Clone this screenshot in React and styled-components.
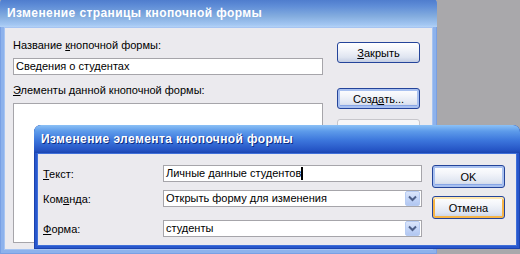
import React from 'react'
import styled, { createGlobalStyle, css } from 'styled-components'

const GlobalStyle = createGlobalStyle`
  html, body { margin: 0; padding: 0; }
  body {
    font-family: "Liberation Sans", Arial, sans-serif;
    font-size: 11px;
    color: #000;
  }
`

const Desktop = styled.div`
  position: relative;
  width: 520px;
  height: 254px;
  background: #a9a8ab;
  overflow: hidden;
`

const Window = styled.div`
  position: absolute;
  left: ${p => p.$left}px;
  top: ${p => p.$top}px;
  width: ${p => p.$width}px;
  height: ${p => p.$height}px;
  box-sizing: border-box;
  display: flex;
  flex-direction: column;
  border-radius: 7px 7px 0 0;
  background: ${p => (p.$active ? '#2857cc' : '#8db2ec')};
  padding: 0 ${p => p.$frame}px ${p => p.$frame}px;
  box-shadow: inset 0 0 0 1px ${p => (p.$active ? '#1c43ae' : '#79a0e4')};
`

const TitleBar = styled.div`
  flex: none;
  height: ${p => p.$h}px;
  margin: 0 -${p => p.$frame}px;
  padding: ${p => p.$pt}px 0 0 ${p => p.$pl}px;
  box-sizing: border-box;
  border-radius: 7px 7px 0 0;
  display: flex;
  align-items: center;
  color: #fff;
  font-family: "Liberation Sans", Arial, sans-serif;
  font-weight: bold;
  font-size: 12px;
  letter-spacing: 0.4px;
  white-space: nowrap;
  overflow: hidden;
  ${p =>
    p.$active
      ? css`
          background: linear-gradient(180deg, #8cc1f6 0%, #5d9bea 22%, #3c76dc 55%, #2656c6 88%, #1b45b0 100%);
          text-shadow: 1px 1px 0 #0b2d86;
        `
      : css`
          background: linear-gradient(180deg, #4775c9 0%, #5f8dd7 30%, #84addf 65%, #a2c6f2 92%, #b3d2f6 100%);
        `}
`

const Client = styled.div`
  flex: 1;
  display: flex;
  background: #ebeaee;
  box-shadow: inset 0 0 0 1px ${p => (p.$active ? '#3f6fd9' : '#a6c4f2')};
`

const Column = styled.div`
  display: flex;
  flex-direction: column;
  width: ${p => p.$w}px;
  margin-left: ${p => p.$ml || 0}px;
  padding-top: ${p => p.$pt || 0}px;
`

const Label = styled.div`
  height: 14px;
  line-height: 14px;
  white-space: nowrap;
  margin-top: ${p => p.$mt || 0}px;
`

const Acc = styled.span`
  text-decoration: underline;
  text-underline-offset: 1px;
`

const Field = styled.div`
  box-sizing: border-box;
  height: ${p => p.$h || 17}px;
  margin-top: ${p => p.$mt || 0}px;
  background: #fff;
  border: 1px solid #a6a5aa;
  padding-left: 2px;
  line-height: 15px;
  white-space: nowrap;
  display: flex;
  align-items: center;
  position: relative;
`

const Caret = styled.span`
  display: inline-block;
  width: 2px;
  height: 13px;
  background: #000;
`

const ComboArrow = styled.span`
  position: absolute;
  right: 1px;
  top: 0;
  width: 15px;
  height: 15px;
  box-sizing: border-box;
  border: 1px solid #b7ccf3;
  border-radius: 2px;
  background: linear-gradient(180deg, #dbe6fb 0%, #c4d6f8 50%, #b2c7f1 100%);
  display: flex;
  align-items: center;
  justify-content: center;
`

const Button = styled.div`
  box-sizing: border-box;
  height: ${p => p.$h}px;
  margin-top: ${p => p.$mt || 0}px;
  border: 1px solid #24449a;
  border-radius: 3px;
  background: linear-gradient(180deg, #ffffff 0%, #f3f5fa 35%, #dfe5f1 75%, #c3cde2 100%);
  display: flex;
  align-items: center;
  justify-content: center;
  white-space: nowrap;
  ${p =>
    p.$ring === 'blue' &&
    css`
      box-shadow: inset 0 0 0 2px #a9c1f0, inset 0 -1px 0 2px #88a6e6;
    `}
  ${p =>
    p.$ring === 'orange' &&
    css`
      box-shadow: inset 0 2px 0 0 #ffe6ae, inset 0 0 0 2px #f6b446;
    `}
  ${p =>
    p.$disabled &&
    css`
      border-color: #c7c6cb;
      background: #f6f6f8;
      color: #a3a2a6;
    `}
`

const FormGrid = styled.div`
  display: grid;
  grid-template-columns: 120px 259px;
  align-items: center;
  align-content: start;
  padding: 12px 0 0 6px;
`

const Row = styled.div`
  display: contents;
`

const Cell = styled.div`
  margin-top: ${p => p.$mt || 0}px;
`

const Chevron = () => (
  <svg width="9" height="7" viewBox="0 0 9 7">
    <path d="M1 1.5 L4.5 5 L8 1.5" fill="none" stroke="#4d5f88" strokeWidth="2" />
  </svg>
)

const Combo = ({ value, mt }) => (
  <Field $mt={mt}>
    {value}
    <ComboArrow>
      <Chevron />
    </ComboArrow>
  </Field>
)

const fields = [
  { label: <><Acc>Т</Acc>екст:</>, kind: 'text', value: 'Личные данные студентов', mt: 0 },
  { label: <>Ком<Acc>а</Acc>нда:</>, kind: 'combo', value: 'Открыть форму для изменения', mt: 8 },
  { label: <><Acc>Ф</Acc>орма:</>, kind: 'combo', value: 'студенты', mt: 13 },
]

export default function App() {
  return (
    <>
      <GlobalStyle />
      <Desktop>
        <Window $left={0} $top={-3} $width={437} $height={257} $frame={4}>
          <TitleBar $h={30} $frame={4} $pt={2} $pl={7}>
            Изменение страницы кнопочной формы
          </TitleBar>
          <Client>
            <Column $w={310} $ml={9}>
              <Label $mt={11}>Название <Acc>к</Acc>нопочной формы:</Label>
              <Field $mt={6}>Сведения о студентах</Field>
              <Label $mt={8}><Acc>Э</Acc>лементы данной кнопочной формы:</Label>
              <Field $mt={6} $h={140} />
            </Column>
            <Column $w={83} $ml={14} $pt={15}>
              <Button $h={21}><Acc>З</Acc>акрыть</Button>
              <Button $h={21} $mt={25} $ring="blue">Созд<Acc>а</Acc>ть...</Button>
              <Button $h={21} $mt={10} $disabled>Изменить...</Button>
            </Column>
          </Client>
        </Window>

        <Window $left={34} $top={125} $width={486} $height={124} $frame={3} $active>
          <TitleBar $h={28} $frame={3} $pt={0} $pl={7} $active>
            Изменение элемента кнопочной формы
          </TitleBar>
          <Client $active>
            <FormGrid>
              {fields.map((f, i) => (
                <Row key={i}>
                  <Cell $mt={f.mt}>{f.label}</Cell>
                  <Cell $mt={f.mt}>
                    {f.kind === 'text' ? (
                      <Field>
                        {f.value}
                        <Caret />
                      </Field>
                    ) : (
                      <Combo value={f.value} />
                    )}
                  </Cell>
                </Row>
              ))}
            </FormGrid>
            <Column $w={73} $ml={10} $pt={12}>
              <Button $h={23} $ring="blue">OK</Button>
              <Button $h={23} $mt={8} $ring="orange">Отмена</Button>
            </Column>
          </Client>
        </Window>
      </Desktop>
    </>
  )
}
